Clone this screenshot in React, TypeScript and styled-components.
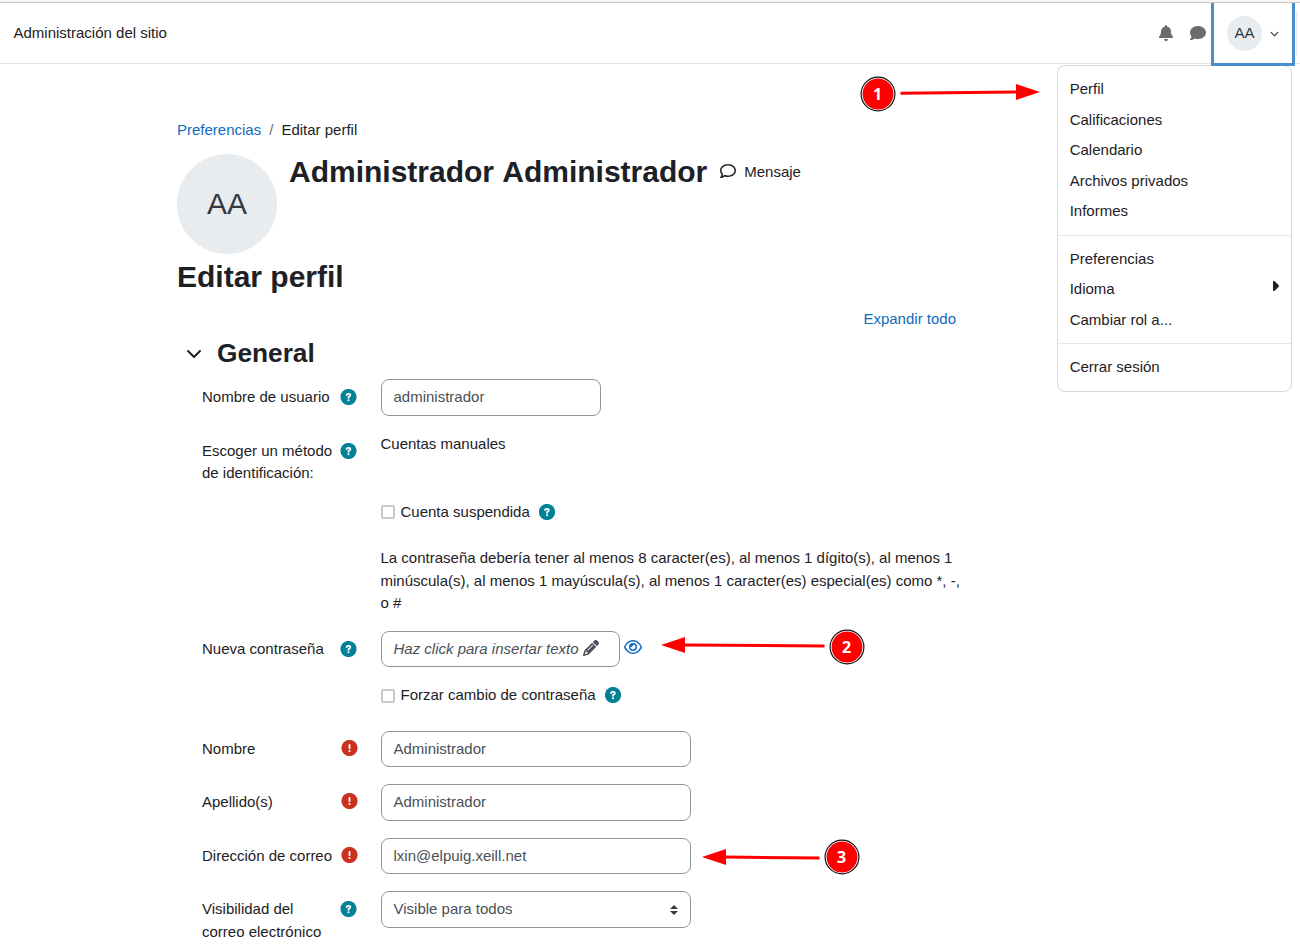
import React from "react";
import styled, { createGlobalStyle } from "styled-components";
import {
  FaBell,
  FaCaretRight,
  FaChevronDown,
  FaComment,
  FaPencil,
  FaRegComment,
  FaRegEye,
} from "react-icons/fa6";

const GlobalStyle = createGlobalStyle`
  * { box-sizing: border-box; }
  body {
    margin: 0;
    overflow: hidden;
    background: #fff;
    color: #1d2125;
    font: 15px/22.5px "Liberation Sans", Arial, sans-serif;
  }
  svg { display: block; flex: none; }
`;

const Page = styled.div`
  position: relative;
  height: 946px;
  overflow: hidden;
`;

const Header = styled.header`
  display: flex;
  align-items: stretch;
  height: 64px;
  padding-left: 13.5px;
  padding-right: 3px;
  border-bottom: 1px solid #dee2e6;
  background: linear-gradient(#f5f5f4 2px, #cfc6bc 2px, #cfc6bc 3px, #fff 3px);
`;

const SiteLink = styled.a`
  margin-top: 22px;
  flex: 1;
`;

const HeaderIcons = styled.div`
  display: flex;
  align-items: center;
  gap: 16px;
  padding-top: 3px;
  margin-right: 5px;
  color: #6a6b6c;
`;

const UserToggle = styled.button`
  display: flex;
  align-items: center;
  gap: 8px;
  width: 84px;
  height: 63px;
  margin: 3px 1px 0 0;
  padding: 0 0 0 13px;
  border: 3px solid #4a8fcc;
  border-top: 0;
  background: #fff;
  color: #343a40;
  font: inherit;
  position: relative;
  z-index: 3;
`;

const Edge = styled.div`
  width: 1px;
  height: 45px;
  margin-top: 11px;
  background: #e6e9ec;
`;

const Avatar = styled.span<{ $size: number; $font: number }>`
  display: flex;
  flex: none;
  align-items: center;
  justify-content: center;
  width: ${(p) => p.$size}px;
  height: ${(p) => p.$size}px;
  border-radius: 50%;
  background: #e9ecef;
  color: #343a40;
  font-size: ${(p) => p.$font}px;
`;

const Menu = styled.nav`
  position: absolute;
  z-index: 2;
  top: 65px;
  left: 1057px;
  width: 235px;
  padding: 8px 0;
  border: 1px solid #d9d9da;
  border-radius: 8px;
  background: #fff;
`;

const MenuItem = styled.a`
  display: flex;
  justify-content: space-between;
  padding: 4px 11.7px;

  svg {
    margin-right: -4px;
  }
`;

const Divider = styled.div`
  height: 1px;
  margin: 8px 0;
  background: #e5e7e9;
`;

const Main = styled.main`
  width: 783px;
  margin-left: 177px;
  padding-top: 55px;
`;

const Breadcrumb = styled.div`
  display: flex;
  gap: 8px;
`;

const Link = styled.a`
  color: #0f6cbf;
`;

const Slash = styled.span`
  color: #6a737b;
`;

const Profile = styled.section`
  display: flex;
  gap: 12px;
  margin-top: 12.5px;
`;

const ProfileName = styled.div`
  display: flex;
  height: 36px;
  align-items: center;
`;

const Title = styled.h1`
  margin: 0;
  font-size: 30px;
  line-height: 36px;
`;

const UserName = styled(Title)`
  word-spacing: 1px;
`;

const Message = styled.a`
  display: flex;
  align-items: center;
  gap: 8px;
  margin-left: 13px;

  svg {
    margin-bottom: 2px;
  }
`;

const PageTitle = styled(Title).attrs({ as: "h2" })`
  margin-top: 5px;
`;

const Expand = styled.div`
  margin: 13px 4px 0 0;
  text-align: right;
`;

const SectionHead = styled.div`
  display: flex;
  align-items: center;
  gap: 15px;
  height: 32px;
  margin: 6.4px 0 10.3px;
  padding-left: 9px;
`;

const SectionTitle = styled.h3`
  margin: 0;
  font-size: 26.25px;
  line-height: 32px;
`;

const Row = styled.div<{ $height: number }>`
  display: grid;
  grid-template-columns: 178.5px 1fr;
  height: ${(p) => p.$height}px;
  padding-left: 25px;
`;

const Label = styled.label`
  display: flex;
  align-items: flex-start;
  justify-content: space-between;
  padding: 7px 23.5px 0 0;
`;

const LabelText = styled.span`
  width: 136px;
  white-space: pre-line;
`;

const Mark = styled.span<{ $required?: boolean }>`
  padding-top: ${(p) => (p.$required ? 2 : 3)}px;
  margin-right: ${(p) => (p.$required ? -1 : 0)}px;
`;

const Field = styled.div<{ $width: number }>`
  display: flex;
  align-items: center;
  width: ${(p) => p.$width}px;
  height: 36.5px;
  padding: 0 12px;
  border: 1px solid #8f959e;
  border-radius: 8px;
  color: #495057;
`;

const Select = styled(Field)`
  justify-content: space-between;
`;

const Secret = styled(Field)`
  gap: 4px;
  font-style: italic;

  svg {
    margin-bottom: 2px;
  }
`;

const Inline = styled.div`
  display: flex;
  align-items: flex-start;
`;

const EyeLink = styled(Link)`
  padding: 7px 0 0 4px;
`;

const CheckLabel = styled.label`
  display: flex;
  align-items: center;
  height: 22.5px;
`;

const CheckBox = styled.span`
  width: 14px;
  height: 14px;
  margin: 0.9px 6px 0 0;
  border: 2px solid #c8c8cc;
  border-radius: 2px;
`;

const CheckHelp = styled.span`
  margin-left: 9px;
`;

const Annotations = styled.svg`
  position: absolute;
  inset: 0;
  z-index: 4;
  pointer-events: none;
`;

function HelpIcon({ width = 16 }: { width?: number }) {
  return (
    <svg width={width} height="16" viewBox={`${(16 - width) / 2} 0 ${width} 16`} fill="none">
      <circle cx="8" cy="8" r="8.1" fill="#008196" />
      <path
        d="M6.1 6.1Q6.2 4.8 7.5 4.8h.9q1.5 0 1.5 1.3 0 .8-.9 1.3L8 8v.9"
        stroke="#fff"
        strokeWidth="1.7"
        strokeLinecap="round"
        strokeLinejoin="round"
      />
      <circle cx="8" cy="11.2" r="1.05" fill="#fff" />
    </svg>
  );
}

function RequiredIcon() {
  return (
    <svg width="17" height="16" viewBox="-0.5 0 17 16" fill="none">
      <circle cx="8" cy="8" r="8.1" fill="#ca3120" />
      <path d="M8 4.9v3.3" stroke="#fff" strokeWidth="1.8" strokeLinecap="round" />
      <circle cx="8" cy="11" r="1.05" fill="#fff" />
    </svg>
  );
}

function Check({ text }: { text: string }) {
  return (
    <CheckLabel>
      <CheckBox />
      {text}
      <CheckHelp>
        <HelpIcon />
      </CheckHelp>
    </CheckLabel>
  );
}

interface FormRowProps {
  height: number;
  label?: string;
  required?: boolean;
  children: React.ReactNode;
}

function FormRow({ height, label, required, children }: FormRowProps) {
  return (
    <Row $height={height}>
      {label ? (
        <Label>
          <LabelText>{label}</LabelText>
          <Mark $required={required}>{required ? <RequiredIcon /> : <HelpIcon width={17} />}</Mark>
        </Label>
      ) : (
        <span />
      )}
      <div>{children}</div>
    </Row>
  );
}

interface StepProps {
  x: number;
  y: number;
  n: number;
  from: [number, number];
  tip: [number, number];
}

/* Numbered circle with an arrow that runs from it to the tip. */
function Step({ x, y, n, from, tip }: StepProps) {
  const base = tip[0] + (tip[0] > from[0] ? -24 : 24);
  return (
    <g>
      <line x1={from[0]} y1={from[1]} x2={base} y2={tip[1]} stroke="#f00" strokeWidth="3" />
      <polygon points={`${tip[0]},${tip[1]} ${base},${tip[1] - 8} ${base},${tip[1] + 8}`} fill="#f00" />
      <circle cx={x} cy={y} r="16.9" fill="#fff" stroke="#111" strokeWidth="1.2" />
      <circle cx={x} cy={y} r="15.4" fill="#f00" />
      <text
        x={x - 0.4}
        y={y + 5.7}
        fill="#fff"
        textAnchor="middle"
        fontFamily='"Open Sans", sans-serif'
        fontWeight="700"
        fontSize="16"
      >
        {n}
      </text>
    </g>
  );
}

export default function App() {
  return (
    <Page>
      <GlobalStyle />
      <Header>
        <SiteLink>Administración del sitio</SiteLink>
        <HeaderIcons>
          <FaBell size={16} />
          <FaComment size={16} />
        </HeaderIcons>
        <UserToggle>
          <Avatar $size={35} $font={15}>AA</Avatar>
          <FaChevronDown size={9} />
        </UserToggle>
        <Edge />
      </Header>

      <Menu>
        <MenuItem>Perfil</MenuItem>
        <MenuItem>Calificaciones</MenuItem>
        <MenuItem>Calendario</MenuItem>
        <MenuItem>Archivos privados</MenuItem>
        <MenuItem>Informes</MenuItem>
        <Divider />
        <MenuItem>Preferencias</MenuItem>
        <MenuItem>
          Idioma
          <FaCaretRight size={16} />
        </MenuItem>
        <MenuItem>Cambiar rol a...</MenuItem>
        <Divider />
        <MenuItem>Cerrar sesión</MenuItem>
      </Menu>

      <Main>
        <Breadcrumb>
          <Link>Preferencias</Link>
          <Slash>/</Slash>
          <span>Editar perfil</span>
        </Breadcrumb>
        <Profile>
          <Avatar $size={100} $font={30}>AA</Avatar>
          <ProfileName>
            <UserName>Administrador Administrador</UserName>
            <Message>
              <FaRegComment size={16} />
              Mensaje
            </Message>
          </ProfileName>
        </Profile>
        <PageTitle>Editar perfil</PageTitle>
        <Expand>
          <Link>Expandir todo</Link>
        </Expand>
        <SectionHead>
          <FaChevronDown size={16} />
          <SectionTitle>General</SectionTitle>
        </SectionHead>

        <FormRow height={53.5} label="Nombre de usuario">
          <Field $width={220}>administrador</Field>
        </FormRow>
        <FormRow height={68} label={"Escoger un método\nde identificación:"}>
          Cuentas manuales
        </FormRow>
        <FormRow height={46.5}>
          <Check text="Cuenta suspendida" />
        </FormRow>
        <FormRow height={83.7}>
          La contraseña debería tener al menos 8 caracter(es), al menos 1 dígito(s), al menos 1
          minúscula(s), al menos 1 mayúscula(s), al menos 1 caracter(es) especial(es) como *, -, o #
        </FormRow>
        <FormRow height={53} label="Nueva contraseña">
          <Inline>
            <Secret $width={239}>
              Haz click para insertar texto
              <FaPencil size={16} />
            </Secret>
            <EyeLink>
              <FaRegEye size={18} />
            </EyeLink>
          </Inline>
        </FormRow>
        <FormRow height={47}>
          <Check text="Forzar cambio de contraseña" />
        </FormRow>
        <FormRow height={53.5} label="Nombre" required>
          <Field $width={310.5}>Administrador</Field>
        </FormRow>
        <FormRow height={53.5} label="Apellido(s)" required>
          <Field $width={310.5}>Administrador</Field>
        </FormRow>
        <FormRow height={53.5} label="Dirección de correo" required>
          <Field $width={310.5}>lxin@elpuig.xeill.net</Field>
        </FormRow>
        <FormRow height={55} label={"Visibilidad del\ncorreo electrónico"}>
          <Select $width={310.5}>
            Visible para todos
            <svg width="8" height="10" viewBox="0 0 4 5">
              <path fill="#343a40" d="M2 0L0 2h4zm0 5L0 3h4z" />
            </svg>
          </Select>
        </FormRow>
      </Main>

      <Annotations width="1300" height="946" viewBox="0 0 1300 946">
        <Step n={1} x={878} y={94} from={[900.5, 93.2]} tip={[1040, 92]} />
        <Step n={2} x={847} y={647} from={[824.5, 646]} tip={[661, 645]} />
        <Step n={3} x={842} y={857} from={[819.5, 858]} tip={[702, 857]} />
      </Annotations>
    </Page>
  );
}
